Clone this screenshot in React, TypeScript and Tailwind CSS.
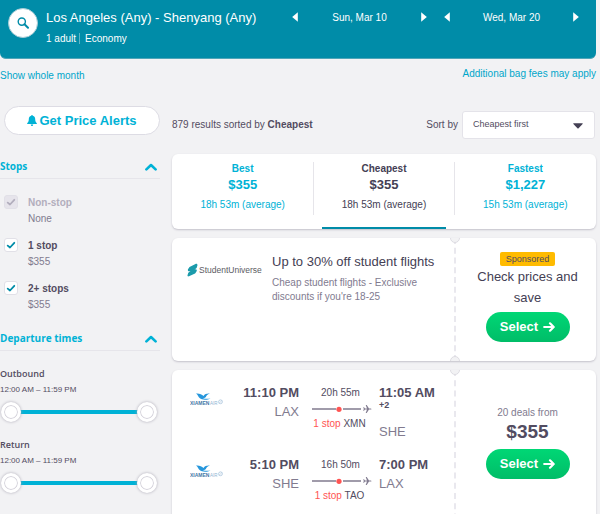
import React from 'react';

const arial = "font-['Liberation_Sans',Arial,sans-serif]";
const openSans = "font-['Open_Sans',sans-serif]";

function Header() {
  return (
    <header className="mr-1 flex h-[59px] rounded-b-md border-b border-[#4fa5b8] bg-[#008ca8] text-white">
      <button
        aria-label="Edit search"
        className="mt-2 ml-2 flex size-[30px] shrink-0 items-center justify-center rounded-full border border-[#a9cdd6] bg-white"
      >
        <svg viewBox="0 0 12 12" className="size-3" fill="none" stroke="#008ca8">
          <circle cx="4.8" cy="4.6" r="3.6" strokeWidth="1.4" />
          <path d="M7.500 7.300 11 10.800" strokeWidth="2" strokeLinecap="round" />
        </svg>
      </button>
      <div className="ml-2 flex-1 pt-2 whitespace-nowrap">
        <h1 className="text-[13px] leading-5">Los Angeles (Any) - Shenyang (Any)</h1>
        <p className="mt-[5px] flex text-[10px] leading-[11px]">
          <span className="mr-[5px] border-r border-[#5fb4c5] pr-[3px]">1 adult</span>
          <span>Economy</span>
        </p>
      </div>
      <DateStepper label="Sun, Mar 10" />
      <DateStepper label="Wed, Mar 20" />
    </header>
  );
}

function DateStepper({ label }: { label: string }) {
  return (
    <div className="mt-2 flex h-[18px] w-[152px] items-center justify-between pr-[17px]">
      <button aria-label={`Day before ${label}`}>
        <svg viewBox="0 0 6 10" className="h-[10px] w-[6px]" fill="#fff">
          <path d="M5.800.2v9.600L.2 5z" />
        </svg>
      </button>
      <span className="text-[10px]">{label}</span>
      <button aria-label={`Day after ${label}`}>
        <svg viewBox="0 0 6 10" className="h-[10px] w-[6px]" fill="#fff">
          <path d="M.2.2v9.600L5.800 5z" />
        </svg>
      </button>
    </div>
  );
}

function SectionHead({ title }: { title: string }) {
  return (
    <h2 className="border-b border-[#e6e5ea]">
      <button className={`flex h-6 w-full items-center justify-between pr-[3px] text-[10px] font-bold text-[#00b2d6] ${openSans}`}>
        {title}
        <svg viewBox="0 0 12 8" className="mt-[2px] h-2 w-3" fill="none" stroke="#00b2d6" strokeWidth="2.6" strokeLinecap="round" strokeLinejoin="round">
          <path d="M1.4 6.4 6 2l4.600 4.400" />
        </svg>
      </button>
    </h2>
  );
}

function StopOption({ id, label, price, disabled }: { id: string; label: string; price: string; disabled?: boolean }) {
  return (
    <div className="flex h-[43px] gap-[10px] pl-1">
      <span className="grid size-[14px]">
        <input
          id={id}
          type="checkbox"
          defaultChecked
          disabled={disabled}
          className="peer col-start-1 row-start-1 size-[14px] appearance-none rounded-[3px] border border-[#e1e0e7] bg-white disabled:bg-[#e6e4eb]"
        />
        <svg
          viewBox="0 0 14 14"
          className="pointer-events-none col-start-1 row-start-1 size-[14px] text-[#008ca8] peer-disabled:text-[#b2aebd]"
          fill="none"
          stroke="currentColor"
          strokeWidth="1.8"
          strokeLinecap="round"
          strokeLinejoin="round"
        >
          <path d="M3.700 7.600 6 9.500l4.300-4.700" />
        </svg>
      </span>
      <label htmlFor={id} className="text-[10px] leading-4">
        <span className={`block font-bold ${disabled ? 'text-[#b2aebd]' : 'text-[#524c61]'}`}>{label}</span>
        <span className="block text-[#817b8f]">{price}</span>
      </label>
    </div>
  );
}

const thumb =
  'pointer-events-none absolute inset-0 h-5 w-full appearance-none bg-transparent [&::-webkit-slider-thumb]:pointer-events-auto [&::-webkit-slider-thumb]:size-5 [&::-webkit-slider-thumb]:appearance-none [&::-webkit-slider-thumb]:rounded-full [&::-webkit-slider-thumb]:border-[3px] [&::-webkit-slider-thumb]:border-solid [&::-webkit-slider-thumb]:border-white [&::-webkit-slider-thumb]:bg-white [&::-webkit-slider-thumb]:shadow-[0_0_3px_#a9a6b3,inset_0_0_0_1px_#d5d3db]';

function TimeRange({ title }: { title: string }) {
  return (
    <fieldset className="mb-[15px] text-[#524c61]">
      <legend className={`text-[9px] leading-4 font-semibold ${openSans}`}>{title}</legend>
      <p className="text-[8px] leading-4">12:00 AM – 11:59 PM</p>
      <div className="relative mt-1 mr-[3px] ml-[1px] flex h-5 items-center">
        <div className="mx-2 h-1 flex-1 bg-[#00b2d6]" />
        <input type="range" min={0} max={1439} defaultValue={0} aria-label={`${title} earliest`} className={thumb} />
        <input type="range" min={0} max={1439} defaultValue={1439} aria-label={`${title} latest`} className={thumb} />
      </div>
    </fieldset>
  );
}

function Sidebar() {
  return (
    <aside className="w-40 shrink-0">
      <button className="ml-1 flex h-[29px] w-[156px] items-center justify-center gap-[2px] rounded-full border border-[#dddce4] bg-white text-[13px] font-bold text-[#00b2d6]">
        <svg viewBox="0 0 10 11" className="h-[11px] w-[10px]" fill="#00b2d6">
          <path d="M5 0c.5 0 .8.300.8.800C7.500 1.200 8.200 2.500 8.200 4.200c0 2 .5 3 1.600 3.900V9H.2v-.9c1.100-.9 1.600-1.900 1.600-3.900C1.800 2.500 2.500 1.200 4.200.8 4.200.3 4.500 0 5 0zM3.800 9.500h2.400C6.200 10.400 5.700 11 5 11s-1.200-.6-1.200-1.500z" />
        </svg>
        Get Price Alerts
      </button>
      <section className="mt-[19px]">
        <SectionHead title="Stops" />
        <div className="h-[147px] pt-4">
          <StopOption id="s0" label="Non-stop" price="None" disabled />
          <StopOption id="s1" label="1 stop" price="$355" />
          <StopOption id="s2" label="2+ stops" price="$355" />
        </div>
      </section>
      <section>
        <SectionHead title="Departure times" />
        <div className="pt-[15px]">
          <TimeRange title="Outbound" />
          <TimeRange title="Return" />
        </div>
      </section>
    </aside>
  );
}

function SortTab({ name, price, time, active }: { name: string; price: string; time: string; active?: boolean }) {
  return (
    <button className={`flex flex-col pt-2 ${active ? 'text-[#444054]' : 'text-[#00b2d6]'}`}>
      <span className={`block h-[53px] w-full ${active ? 'border-x border-[#e6e5ea]' : ''}`}>
        <span className="block text-[10px] leading-[14px] font-bold">{name}</span>
        <span className="block text-[13px] leading-[18px] font-bold">{price}</span>
        <span className="mt-[3px] block text-[10px] leading-4">{time}</span>
      </span>
      {active && <span className="mx-[9px] mt-auto h-[2px] self-stretch bg-[#008ca8]" />}
    </button>
  );
}

function Notch({ place }: { place: string }) {
  return <span className={`absolute -left-[6px] size-[10px] rounded-full border border-[#dddce2] bg-[#f2f2f4] ${place}`} />;
}

function Ticket({ height, children, side }: { height: string; children: React.ReactNode; side: React.ReactNode }) {
  return (
    <article className={`flex overflow-hidden rounded-md bg-white shadow-[0_1px_2px_#c3c1ca] ${height}`}>
      <div className="flex-1">{children}</div>
      <div className="relative flex w-[142px] shrink-0 flex-col items-center border-l-2 border-dashed border-[#e9e8ee] pl-[3px] text-center">
        <Notch place="-top-[5px]" />
        <Notch place="-bottom-[5px]" />
        {side}
      </div>
    </article>
  );
}

function SelectButton() {
  return (
    <button className="flex h-[30px] w-[84px] shrink-0 items-center justify-center gap-[5px] rounded-full bg-linear-to-b from-[#00d775] to-[#00bd68] text-[13px] font-bold text-white">
      Select
      <svg viewBox="0 0 12 10" className="h-[10px] w-3" fill="none" stroke="#fff" strokeWidth="2.200" strokeLinecap="round" strokeLinejoin="round">
        <path d="M1.200 5h9M7 1.300 10.700 5 7 8.700" />
      </svg>
    </button>
  );
}

function XiamenLogo() {
  return (
    <svg viewBox="0 0 34 14" className="mt-[2px] h-[14px] w-[34px]" role="img" aria-label="Xiamen Air">
      <path d="M6 1.500c3.200-.3 5.800.6 7.500 2.500C14.900 2 16.800 1.300 20 1.600c-2.100.7-3.200 1.700-3.900 3-.7 1.400-2.400 1.900-4.300 1.400 1.300.8 4.500 1.100 8.700.6-3.300 1.700-8.700 1.700-10.900-.5C8.100 4.700 8 2.900 6 1.500z" fill="#2797dc" />
      <text x="0" y="12.500" fontSize="5" fontWeight="bold" fill="#4478a8" fontFamily="Liberation Sans, sans-serif">XIAMEN</text>
      <text x="20" y="12.500" fontSize="4.500" fill="#8fb4d2" fontFamily="Liberation Sans, sans-serif">AIR</text>
      <circle cx="30.500" cy="9.800" r="1.900" fill="none" stroke="#a9c4dc" strokeWidth=".8" />
      <path d="M29 11.500 32 8.300" stroke="#a9c4dc" strokeWidth=".6" />
    </svg>
  );
}

function FlightLeg({ dep, from, time, via, arr, extra, to }: { dep: string; from: string; time: string; via: string; arr: string; extra?: string; to: string }) {
  return (
    <div className="flex h-[72px] text-[#524c61]">
      <div className="w-[54px] pt-[6px] pl-[18px]">
        <XiamenLogo />
      </div>
      <div className="w-[73px] text-right">
        <p className="text-[13px] leading-[18px] font-bold">{dep}</p>
        <p className="text-[13px] leading-5 text-[#817b8f]">{from}</p>
      </div>
      <div className="w-20 pl-[13px] text-center text-[10px]">
        <p className="pr-3 pl-[2px] text-center leading-[18px] whitespace-nowrap">{time}</p>
        <svg viewBox="0 0 60 10" className="my-[2px] h-[10px] w-[60px]">
          <path d="M0 5h24M31 5h18" stroke="#817b8f" strokeWidth="1.500" />
          <circle cx="27" cy="5.300" r="2.600" fill="#ff5452" />
          <path d="M51.200 3.300h.8l1 1.200h2L53.700 1h1l2.300 3.500h1.700c1 0 1 1.100 0 1.100H57L54.700 9h-1L55 5.600h-2l-1 1.200h-.8l.6-1.800z" fill="#817b8f" />
        </svg>
        <p className="pr-3 leading-[15px] whitespace-nowrap">
          <span className="text-[#ff5452]">1 stop</span> {via}
        </p>
      </div>
      <div className="flex-1">
        <p className="text-[13px] leading-[18px] font-bold whitespace-nowrap">{arr}</p>
        {extra && <p className="h-5 text-[9px] leading-[7px] font-bold">{extra}</p>}
        <p className="text-[13px] leading-5 text-[#817b8f]">{to}</p>
      </div>
    </div>
  );
}

export default function App() {
  return (
    <div className={`h-screen overflow-hidden bg-[#f2f2f4] ${arial}`}>
      <Header />
      <div className="mr-1 flex h-[47px] items-start justify-between pt-[7px] text-[10px] leading-4 text-[#00a6ca]">
        <a href="#month" className="pt-[2px]">Show whole month</a>
        <a href="#bags">Additional bag fees may apply</a>
      </div>
      <div className="mr-1 flex gap-3">
        <Sidebar />
        <main className="min-w-0 flex-1">
          <div className="flex h-12 items-start pt-[5px] text-[10px] text-[#524c61]">
            <p className="flex-1 leading-7">
              879 results sorted by <strong>Cheapest</strong>
            </p>
            <label htmlFor="sort" className="mr-1 leading-7">Sort by</label>
            <div className="relative mr-[1px]">
              <select id="sort" className="h-7 w-[133px] appearance-none rounded-[3px] border border-[#e4e3e9] bg-white pl-[10px] text-[9px]">
                <option>Cheapest first</option>
              </select>
              <svg viewBox="0 0 10 6" className="pointer-events-none absolute top-3 right-3 h-[6px] w-[10px]" fill="#444054">
                <path d="M.8.300h8.400c.5 0 .7.500.4.800L5.600 5.300c-.4.400-.8.400-1.200 0L.4 1.100C.1.800.3.300.8.300z" />
              </svg>
            </div>
          </div>
          <div className="grid h-[75px] grid-cols-3 overflow-hidden rounded-md bg-white shadow-[0_1px_2px_#c3c1ca]">
            <SortTab name="Best" price="$355" time="18h 53m (average)" />
            <SortTab name="Cheapest" price="$355" time="18h 53m (average)" active />
            <SortTab name="Fastest" price="$1,227" time="15h 53m (average)" />
          </div>
          <div className="mt-[9px] flex flex-col gap-[9px]">
            <Ticket
              height="h-[123px]"
              side={
                <>
                  <span className="mt-[14px] h-[14px] rounded-[2px] bg-[#ffbb00] px-[6px] text-[9px] leading-[14px] text-[#524c61]">Sponsored</span>
                  <p className="mb-[4px] w-[110px] text-[13px] leading-[21px] text-[#444054]">Check prices and save</p>
                  <SelectButton />
                </>
              }
            >
              <div className="flex pt-4">
                <svg viewBox="0 0 76 14" className="mt-[9px] ml-[15px] h-[14px] w-[76px] shrink-0" role="img" aria-label="StudentUniverse">
                  <path d="M2.500 4 8.500 1c1-.5 2.300.2 1.900 1.500L9.800 4.500C9.600 5.100 9.200 5.400 8.700 5.700L7.500 6.300h1c1.200 0 1.700.9 1.100 1.900L8.500 9.900c-.3.500-.6.700-1 .9L2 13.300c-1.100.5-1.800-.2-1.400-1.300L1.200 10c.2-.5.500-.8 1-1L3.500 8.300H2.300C1 8.300.6 7.200 1 6.200z" fill="#1b9bab" />
                  <text x="12" y="10" fontSize="8.500" fill="#5b5c63" fontFamily="Liberation Sans, sans-serif">StudentUniverse</text>
                </svg>
                <div className="ml-[9px]">
                  <h3 className="text-[13px] leading-4 whitespace-nowrap text-[#444054]">Up to 30% off student flights</h3>
                  <p className="mt-[6px] w-[150px] text-[10px] leading-[14px] text-[#817b8f]">Cheap student flights - Exclusive discounts if you're 18-25</p>
                </div>
              </div>
            </Ticket>
            <Ticket
              height="h-[170px]"
              side={
                <>
                  <p className="mt-[35px] text-[10px] leading-4 text-[#817b8f]">20 deals from</p>
                  <p className="mb-[6px] text-[19px] leading-[22px] font-bold text-[#524c61]">$355</p>
                  <SelectButton />
                </>
              }
            >
              <div className="pt-[14px]">
                <FlightLeg dep="11:10 PM" from="LAX" time="20h 55m" via="XMN" arr="11:05 AM" extra="+2" to="SHE" />
                <FlightLeg dep="5:10 PM" from="SHE" time="16h 50m" via="TAO" arr="7:00 PM" to="LAX" />
              </div>
            </Ticket>
          </div>
        </main>
      </div>
    </div>
  );
}
